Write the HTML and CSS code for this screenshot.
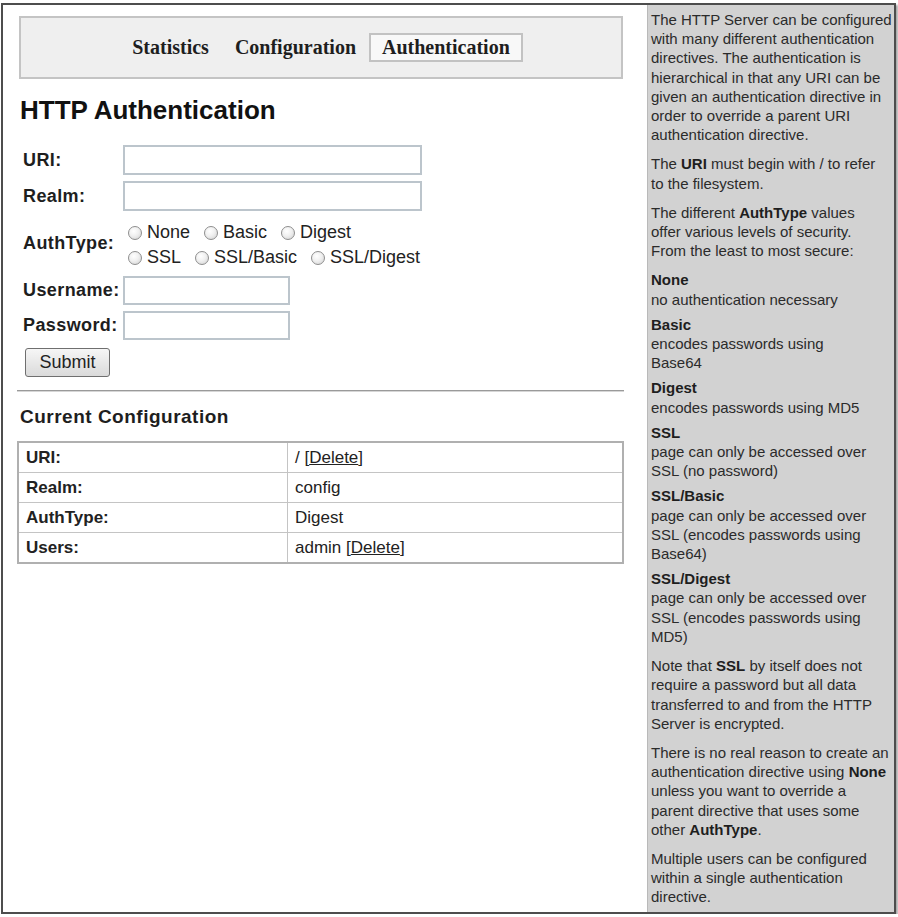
FILE: index.html
```html
<!DOCTYPE html>
<html lang="en">
<head>
<meta charset="utf-8">
<title>HTTP Authentication</title>
<link rel="stylesheet" href="styles.css">
</head>
<body>
<div class="frame">
  <main class="main">
    <nav class="tabs">
      <a class="tab">Statistics</a>
      <a class="tab">Configuration</a>
      <a class="tab active">Authentication</a>
    </nav>

    <h1 class="title">HTTP Authentication</h1>

    <form class="auth-form">
      <label class="field-label" for="uri">URI:</label>
      <input class="text-input wide" id="uri" type="text">

      <label class="field-label" for="realm">Realm:</label>
      <input class="text-input wide" id="realm" type="text">

      <span class="field-label">AuthType:</span>
      <div class="radio-group">
        <div class="radio-row">
          <label class="option"><input class="radio" type="radio" name="authtype">None</label>
          <label class="option"><input class="radio" type="radio" name="authtype">Basic</label>
          <label class="option"><input class="radio" type="radio" name="authtype">Digest</label>
        </div>
        <div class="radio-row">
          <label class="option"><input class="radio" type="radio" name="authtype">SSL</label>
          <label class="option"><input class="radio" type="radio" name="authtype">SSL/Basic</label>
          <label class="option"><input class="radio" type="radio" name="authtype">SSL/Digest</label>
        </div>
      </div>

      <label class="field-label" for="user">Username:</label>
      <input class="text-input short" id="user" type="text">

      <label class="field-label" for="pass">Password:</label>
      <input class="text-input short" id="pass" type="password">
    </form>

    <button class="submit" type="button">Submit</button>

    <hr class="divider">

    <h2 class="subtitle">Current Configuration</h2>

    <table class="config">
      <tr><th>URI:</th><td>/ [<a class="link">Delete</a>]</td></tr>
      <tr><th>Realm:</th><td>config</td></tr>
      <tr><th>AuthType:</th><td>Digest</td></tr>
      <tr><th>Users:</th><td>admin [<a class="link">Delete</a>]</td></tr>
    </table>
  </main>

  <aside class="help">
    <p>The HTTP Server can be configured<br>with many different authentication<br>directives. The authentication is<br>hierarchical in that any URI can be<br>given an authentication directive in<br>order to override a parent URI<br>authentication directive.</p>
    <p>The <b>URI</b> must begin with / to refer<br>to the filesystem.</p>
    <p>The different <b>AuthType</b> values<br>offer various levels of security.<br>From the least to most secure:</p>
    <dl class="types">
      <dt>None</dt>
      <dd>no authentication necessary</dd>
      <dt>Basic</dt>
      <dd>encodes passwords using<br>Base64</dd>
      <dt>Digest</dt>
      <dd>encodes passwords using MD5</dd>
      <dt>SSL</dt>
      <dd>page can only be accessed over<br>SSL (no password)</dd>
      <dt>SSL/Basic</dt>
      <dd>page can only be accessed over<br>SSL (encodes passwords using<br>Base64)</dd>
      <dt>SSL/Digest</dt>
      <dd>page can only be accessed over<br>SSL (encodes passwords using<br>MD5)</dd>
    </dl>
    <p>Note that <b>SSL</b> by itself does not<br>require a password but all data<br>transferred to and from the HTTP<br>Server is encrypted.</p>
    <p>There is no real reason to create an<br>authentication directive using <b>None</b><br>unless you want to override a<br>parent directive that uses some<br>other <b>AuthType</b>.</p>
    <p>Multiple users can be configured<br>within a single authentication<br>directive.</p>
  </aside>
</div>
</body>
</html>
```

FILE: styles.css
```css
html, body {
  margin: 0;
  padding: 0;
  background: #ffffff;
}

body {
  font-family: "Liberation Sans", Arial, sans-serif;
  color: #222;
}

/* window frame holding the page and the help column */
.frame {
  box-sizing: border-box;
  width: 895px;
  height: 911px;
  margin: 3px 0 0 1px;
  border: 2px solid #4d4d4d;
  box-shadow: 2px 2px 2px rgba(0, 0, 0, 0.35);
  display: grid;
  grid-template-columns: 644px 1fr;
  background: #fff;
}

.main {
  padding: 11px 23px 0 14px;
  min-width: 0;
}

/* top tab bar */
.tabs {
  box-sizing: border-box;
  height: 63px;
  margin: 0 1px 0 2px;
  border: 2px solid #c4c4c4;
  background: #efefef;
  display: flex;
  justify-content: center;
  align-items: center;
}

.tab {
  font-family: "Liberation Serif", "Times New Roman", serif;
  font-weight: bold;
  font-size: 20px;
  line-height: 23px;
  color: #1e1e1e;
  padding: 1px 11px;
  border: 2px solid transparent;
}

.tab.active {
  border-color: #c2c2c2;
  background: #f8f8f8;
}

.title {
  font-size: 26px;
  line-height: 30px;
  font-weight: bold;
  color: #111;
  margin: 16px 0 20px 3px;
}

/* form: label column + control column */
.auth-form {
  display: grid;
  grid-template-columns: 106px auto;
  row-gap: 6px;
  align-items: center;
  justify-items: start;
}

.field-label {
  font-size: 18px;
  font-weight: bold;
  letter-spacing: 0.4px;
  color: #1e1e1e;
  padding-left: 6px;
}

.text-input {
  box-sizing: border-box;
  margin: 0;
  border: 2px solid #bcc5cc;
  background: #fff;
  font: 16px "Liberation Sans", Arial, sans-serif;
}

.text-input.wide {
  width: 299px;
  height: 30px;
}

.text-input.short {
  width: 167px;
  height: 29px;
}

.radio-group {
  padding-top: 3px;
}

.radio-row {
  display: flex;
  align-items: center;
  height: 25px;
}

.option {
  display: flex;
  align-items: center;
  font-size: 18px;
  color: #222;
  margin-right: 9px;
}

.radio {
  appearance: none;
  -webkit-appearance: none;
  box-sizing: border-box;
  width: 14px;
  height: 14px;
  margin: 0 5px 0 5px;
  border: 1px solid #8e8e8e;
  border-radius: 50%;
  background: radial-gradient(circle at 40% 35%, #ffffff 0%, #f0f0f0 45%, #cfcfcf 100%);
}

.submit {
  display: block;
  box-sizing: border-box;
  width: 85px;
  height: 29px;
  margin: 8px 0 0 8px;
  border: 1px solid #6f6f6f;
  border-radius: 3px;
  background: linear-gradient(#f6f6f6, #dadada);
  font: 18px "Liberation Sans", Arial, sans-serif;
  color: #222;
  padding: 0;
}

.divider {
  margin: 13px 0 0 0;
  height: 0;
  border: 0;
  border-top: 1px solid #9a9a9a;
  border-bottom: 1px solid #d6d6d6;
}

.subtitle {
  font-size: 19px;
  line-height: 22px;
  font-weight: bold;
  letter-spacing: 0.5px;
  color: #1e1e1e;
  margin: 14px 0 13px 3px;
}

/* current configuration table */
.config {
  width: 100%;
  border-collapse: collapse;
  border: 2px solid #b0b0b0;
  font-size: 17px;
}

.config th,
.config td {
  height: 29px;
  padding: 0 7px;
  border: 1px solid #c4c4c4;
  text-align: left;
  color: #222;
}

.config th {
  width: 254px;
  font-weight: bold;
}

.config td {
  font-weight: normal;
}

.link {
  color: #222;
  text-decoration: underline;
}

/* help column */
.help {
  background: #d2d2d2;
  border-left: 1px solid #b9b9b9;
  padding: 5px 0 0 3px;
  font-size: 15px;
  line-height: 19.2px;
  color: #2b2b2b;
  white-space: nowrap;
  overflow: hidden;
}

.help p {
  margin: 0 0 10px;
}

.help b,
.types dt {
  font-weight: bold;
  color: #1e1e1e;
}

.types {
  margin: 0 0 10px;
}

.types dd {
  margin: 0 0 6px;
}

.types dd:last-child {
  margin-bottom: 0;
}
```
